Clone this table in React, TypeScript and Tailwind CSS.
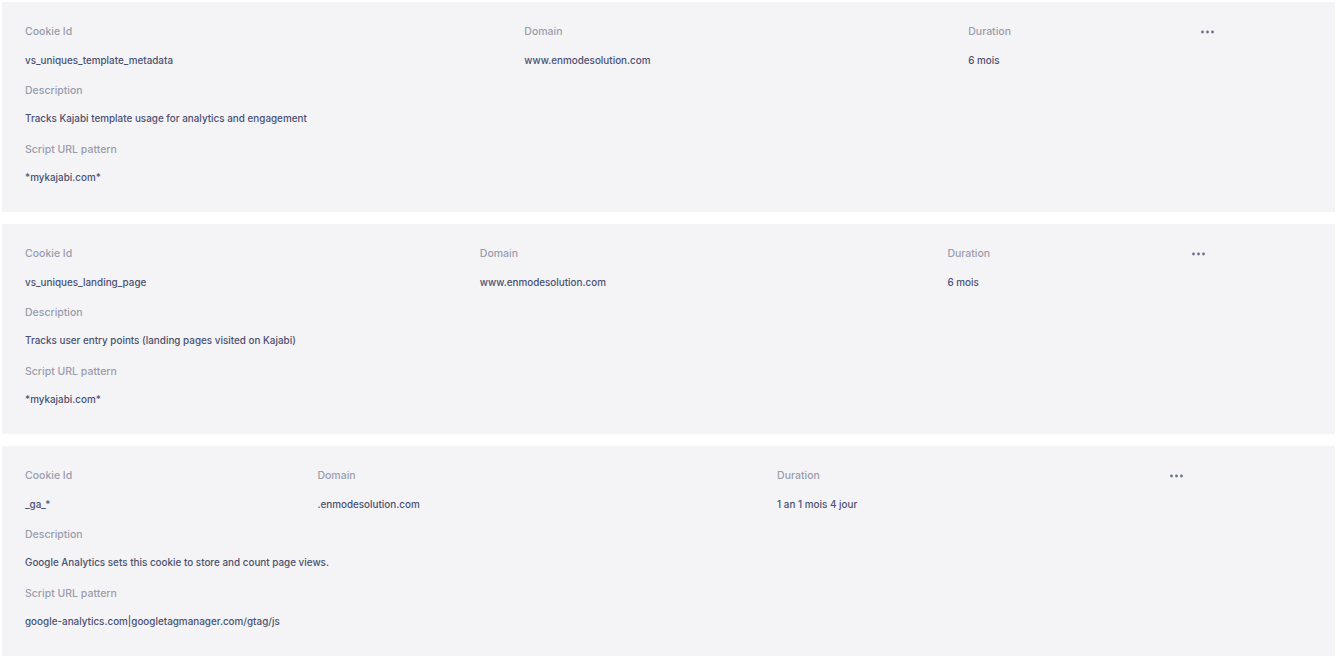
interface CookieRow {
    id: string;
    domain: string;
    duration: string;
    description: string;
    pattern: string;
}

const cookies: CookieRow[] = [
    {
        id: "vs_uniques_template_metadata",
        domain: "www.enmodesolution.com",
        duration: "6 mois",
        description: "Tracks Kajabi template usage for analytics and engagement",
        pattern: "*mykajabi.com*",
    },
    {
        id: "vs_uniques_landing_page",
        domain: "www.enmodesolution.com",
        duration: "6 mois",
        description: "Tracks user entry points (landing pages visited on Kajabi)",
        pattern: "*mykajabi.com*",
    },
    {
        id: "_ga_*",
        domain: ".enmodesolution.com",
        duration: "1 an 1 mois 4 jour",
        description: "Google Analytics sets this cookie to store and count page views.",
        pattern: "google-analytics.com|googletagmanager.com/gtag/js",
    },
];

const label = "text-[10.5px] font-medium text-[#9a9cab]";
const value = "text-[9.9px] font-medium text-[#4b5170]";
const cell = "h-[29px] pl-[23px] pr-[26px] text-left align-middle whitespace-nowrap";

function Dots() {
    return (
        <svg width="13" height="4" viewBox="0 0 13 4" className="block text-[#6b6f8c]">
            <circle cx="1.5" cy="2" r="1.4" fill="currentColor" />
            <circle cx="6.5" cy="2" r="1.4" fill="currentColor" />
            <circle cx="11.5" cy="2" r="1.4" fill="currentColor" />
        </svg>
    );
}

function CookieCard({ row }: { row: CookieRow }) {
    return (
        <div className="bg-[#f4f4f7] pt-[15px] pb-[21px]">
            <table className="w-full table-auto border-collapse">
                <tbody>
                    <tr>
                        <td className={`${cell} ${label}`}>Cookie Id</td>
                        <td className={`${cell} ${label}`}>Domain</td>
                        <td className={`${cell} ${label}`}>Duration</td>
                        <td className={cell}>
                            <Dots />
                        </td>
                    </tr>
                    <tr>
                        <td className={`${cell} ${value}`}>{row.id}</td>
                        <td className={`${cell} ${value}`}>{row.domain}</td>
                        <td className={`${cell} ${value}`}>{row.duration}</td>
                        <td className={cell}></td>
                    </tr>
                </tbody>
            </table>
            <div className="px-[23px] pt-[1px]">
                <div className={`h-[29px] flex items-center ${label}`}>Description</div>
                <div className={`h-[27px] flex items-center ${value}`}>{row.description}</div>
                <div className={`mt-[3px] h-[29px] flex items-center ${label}`}>Script URL pattern</div>
                <div className={`h-[27px] flex items-center ${value}`}>{row.pattern}</div>
            </div>
        </div>
    );
}

export default function App() {
    return (
        <div className="min-h-screen bg-white pt-[2px] pl-[2px] pr-[3px]" style={{ fontFamily: "Inter, 'Noto Sans', sans-serif" }}>
            <div className="flex flex-col gap-[12px]">
                {cookies.map((c) => (
                    <CookieCard key={c.id} row={c} />
                ))}
            </div>
        </div>
    );
}
